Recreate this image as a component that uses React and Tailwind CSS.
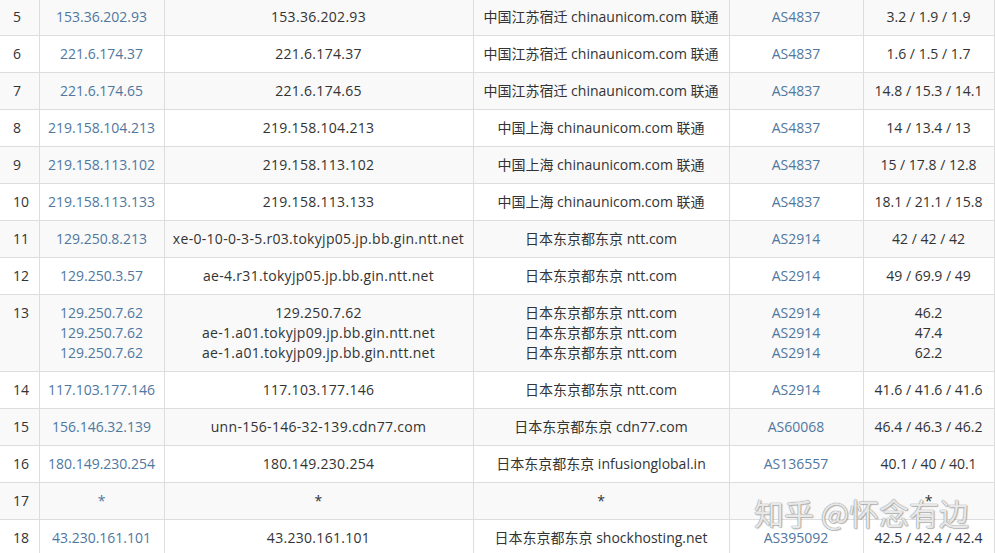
import React from 'react';

// traceroute hops 5..18
const hops = [
  { n: 5, lines: [['153.36.202.93', '153.36.202.93', '中国江苏宿迁 chinaunicom.com 联通', 'AS4837']], rtt: ['3.2 / 1.9 / 1.9'] },
  { n: 6, lines: [['221.6.174.37', '221.6.174.37', '中国江苏宿迁 chinaunicom.com 联通', 'AS4837']], rtt: ['1.6 / 1.5 / 1.7'] },
  { n: 7, lines: [['221.6.174.65', '221.6.174.65', '中国江苏宿迁 chinaunicom.com 联通', 'AS4837']], rtt: ['14.8 / 15.3 / 14.1'] },
  { n: 8, lines: [['219.158.104.213', '219.158.104.213', '中国上海 chinaunicom.com 联通', 'AS4837']], rtt: ['14 / 13.4 / 13'] },
  { n: 9, lines: [['219.158.113.102', '219.158.113.102', '中国上海 chinaunicom.com 联通', 'AS4837']], rtt: ['15 / 17.8 / 12.8'] },
  { n: 10, lines: [['219.158.113.133', '219.158.113.133', '中国上海 chinaunicom.com 联通', 'AS4837']], rtt: ['18.1 / 21.1 / 15.8'] },
  { n: 11, lines: [['129.250.8.213', 'xe-0-10-0-3-5.r03.tokyjp05.jp.bb.gin.ntt.net', '日本东京都东京 ntt.com', 'AS2914']], rtt: ['42 / 42 / 42'] },
  { n: 12, lines: [['129.250.3.57', 'ae-4.r31.tokyjp05.jp.bb.gin.ntt.net', '日本东京都东京 ntt.com', 'AS2914']], rtt: ['49 / 69.9 / 49'] },
  {
    n: 13,
    lines: [
      ['129.250.7.62', '129.250.7.62', '日本东京都东京 ntt.com', 'AS2914'],
      ['129.250.7.62', 'ae-1.a01.tokyjp09.jp.bb.gin.ntt.net', '日本东京都东京 ntt.com', 'AS2914'],
      ['129.250.7.62', 'ae-1.a01.tokyjp09.jp.bb.gin.ntt.net', '日本东京都东京 ntt.com', 'AS2914'],
    ],
    rtt: ['46.2', '47.4', '62.2'],
  },
  { n: 14, lines: [['117.103.177.146', '117.103.177.146', '日本东京都东京 ntt.com', 'AS2914']], rtt: ['41.6 / 41.6 / 41.6'] },
  { n: 15, lines: [['156.146.32.139', 'unn-156-146-32-139.cdn77.com', '日本东京都东京 cdn77.com', 'AS60068']], rtt: ['46.4 / 46.3 / 46.2'] },
  { n: 16, lines: [['180.149.230.254', '180.149.230.254', '日本东京都东京 infusionglobal.in', 'AS136557']], rtt: ['40.1 / 40 / 40.1'] },
  { n: 17, lines: [['*', '*', '*', '']], rtt: ['*'] },
  { n: 18, lines: [['43.230.161.101', '43.230.161.101', '日本东京都东京 shockhosting.net', 'AS395092']], rtt: ['42.5 / 42.4 / 42.4'] },
];

const cell = 'border border-[#dddddd] px-2 pt-[8px] pb-[8px] align-top text-center leading-[20px]';

export default function App() {
  return (
    <div
      className="relative w-[995px] h-[553px] overflow-hidden bg-white text-[#333333] text-[14px]"
      style={{ fontFamily: '"Open Sans", "Noto Sans CJK SC", sans-serif' }}
    >
      <table className="-mt-[2px] w-[994px] table-fixed border-collapse">
        <colgroup>
          <col className="w-[39px]" />
          <col className="w-[125px]" />
          <col className="w-[309px]" />
          <col className="w-[256px]" />
          <col className="w-[134px]" />
          <col className="w-[131px]" />
        </colgroup>
        <tbody>
          {hops.map((h, i) => (
            <tr key={h.n} className={i % 2 === 0 ? 'bg-[#f9f9f9]' : 'bg-white'}>
              <td className="border border-[#dddddd] border-l-0 pl-[13px] pt-[8px] pb-[8px] align-top leading-[20px]">
                {h.n}
              </td>
              <td className={`${cell} text-[#4f77a0]`}>
                {h.lines.map((l, k) => <div key={k}>{l[0]}</div>)}
              </td>
              <td className={`${cell} tracking-[0.3px] whitespace-nowrap`}>
                {h.lines.map((l, k) => <div key={k}>{l[1]}</div>)}
              </td>
              <td className={`${cell} whitespace-nowrap`}>
                {h.lines.map((l, k) => <div key={k}>{l[2]}</div>)}
              </td>
              <td className={`${cell} text-[#4f77a0]`}>
                {h.lines.map((l, k) => <div key={k}>{l[3] || '\u00a0'}</div>)}
              </td>
              <td className={`${cell} whitespace-nowrap`}>
                {h.rtt.map((r, k) => <div key={k}>{r}</div>)}
              </td>
            </tr>
          ))}
        </tbody>
      </table>
      <div
        className="absolute left-[754px] top-[494px] text-[30px] leading-[36px] text-white/80 whitespace-nowrap pointer-events-none"
        style={{
          fontFamily: '"Noto Sans CJK SC", sans-serif',
          textShadow: '0 0 1px #8a8a8a, 0 0 1px #8a8a8a, 1px 1px 1px rgba(0,0,0,0.25)',
        }}
      >
        知乎 @怀念有边
      </div>
    </div>
  );
}
